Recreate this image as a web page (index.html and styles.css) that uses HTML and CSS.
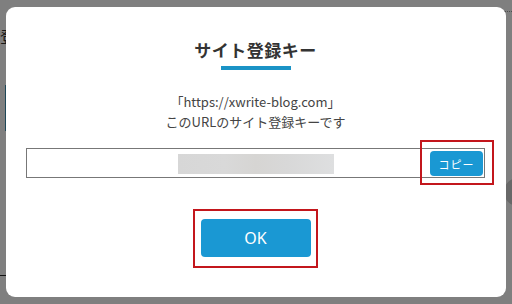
FILE: index.html
```html
<!DOCTYPE html>
<html lang="ja">
<head>
<meta charset="utf-8">
<link rel="stylesheet" href="styles.css">
</head>
<body>
<div class="page">
  <div class="page-char">登</div>
  <div class="page-bar"></div>
  <div class="page-line"></div>
  <div class="page-dots"></div>
  <div class="page-knob"></div>
</div>
<div class="overlay">
  <div class="modal">
    <h1 class="title">サイト登録キー</h1>
    <div class="title-rule"></div>
    <p class="desc">「https://xwrite-blog.com」<br>このURLのサイト登録キーです</p>
    <div class="field">
      <div class="redacted"></div>
      <button class="copy">コピー</button>
      <div class="mark mark-copy"></div>
    </div>
    <div class="actions">
      <button class="ok">OK</button>
      <div class="mark mark-ok"></div>
    </div>
  </div>
</div>
</body>
</html>
```
FILE: styles.css
```css
html, body {
  margin: 0;
  padding: 0;
}
body {
  width: 512px;
  height: 304px;
  overflow: hidden;
  position: relative;
  background: #ffffff;
  font-family: "Noto Sans CJK JP", "Noto Sans", sans-serif;
}
.page {
  position: absolute;
  inset: 0;
}
.page-char {
  position: absolute;
  left: 0;
  top: 24px;
  font-size: 16px;
  color: #333;
}
.page-bar {
  position: absolute;
  left: 5px;
  top: 85px;
  width: 3px;
  height: 46px;
  background: #3d8fae;
}
.page-line {
  position: absolute;
  left: 0;
  top: 275px;
  width: 8px;
  height: 1px;
  background: #222;
}
.page-dots {
  position: absolute;
  right: 0;
  top: 11px;
  width: 8px;
  border-top: 1px dotted #999;
}
.page-knob {
  position: absolute;
  left: 504px;
  top: 178px;
  width: 28px;
  height: 28px;
  border-radius: 50%;
  background: #d0d0d0;
}
.overlay {
  position: absolute;
  inset: 0;
  background: rgba(0, 0, 0, 0.5);
  padding: 7px 6px;
  box-sizing: border-box;
}
.modal {
  width: 500px;
  height: 290px;
  background: #fff;
  border-radius: 9px;
  box-sizing: border-box;
  padding: 31px 21px 0 20px;
  display: flex;
  flex-direction: column;
  align-items: center;
}
.title {
  margin: 0;
  font-size: 17px;
  line-height: 24px;
  font-weight: 700;
  color: #333;
  letter-spacing: 0.5px;
}
.title-rule {
  width: 70px;
  height: 4px;
  margin-top: 4px;
  background: #1a93c6;
}
.desc {
  margin: 22px 0 0;
  font-size: 13px;
  line-height: 20px;
  color: #444;
  text-align: center;
}
.field {
  position: relative;
  align-self: stretch;
  height: 30px;
  margin-top: 16px;
  border: 1px solid #777;
  box-sizing: border-box;
  display: flex;
  align-items: center;
  justify-content: space-between;
  padding: 2px 1px 1px 151px;
}
.redacted {
  width: 156px;
  height: 20px;
  background: linear-gradient(90deg, #d7d7d7 0%, #d9d9d9 30%, #d6d5d3 50%, #d8d8d8 70%, #dedfe0 100%);
}
.copy {
  width: 53px;
  height: 25px;
  border: 0;
  border-radius: 4px;
  background: #1a98d3;
  color: #fff;
  font-family: "Noto Sans CJK JP", sans-serif;
  font-size: 11px;
  letter-spacing: 1px;
  padding: 0;
}
.mark {
  position: absolute;
  border: 2px solid #c3161c;
  box-sizing: border-box;
}
.mark-copy {
  left: 393px;
  top: -9px;
  width: 74px;
  height: 45px;
}
.actions {
  position: relative;
  margin-top: 41px;
}
.ok {
  display: block;
  width: 110px;
  height: 38px;
  border: 0;
  border-radius: 4px;
  background: #1a98d3;
  color: #fff;
  font-family: "Noto Sans", sans-serif;
  font-size: 16px;
  padding: 0;
}
.mark-ok {
  left: -8px;
  top: -10px;
  width: 125px;
  height: 59px;
}
```
